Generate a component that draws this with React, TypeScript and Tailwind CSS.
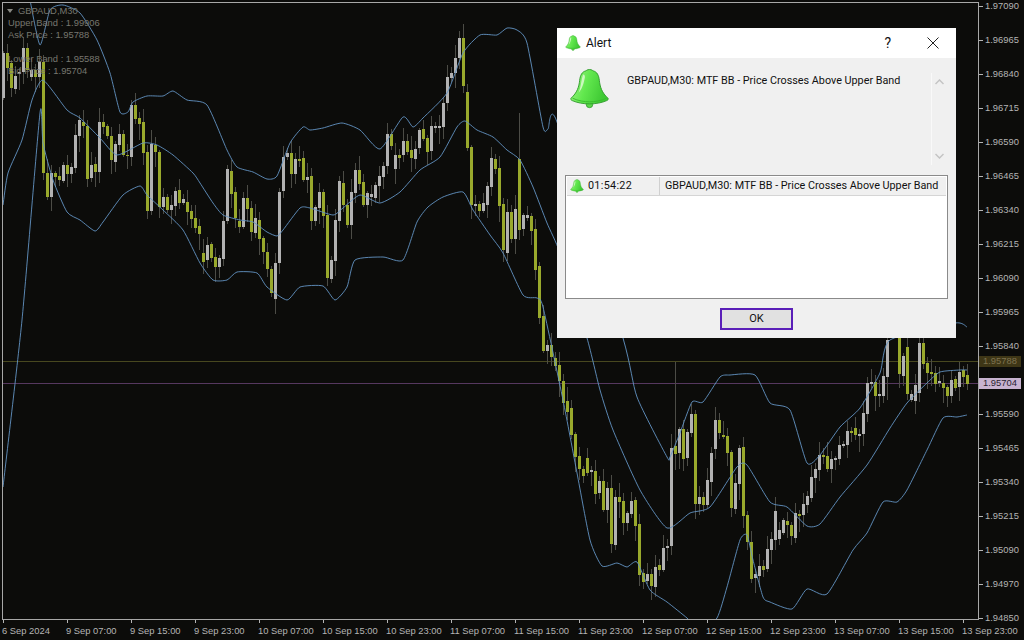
import { useId } from "react";

// ── Chart data, in page pixels ────────────────────────────────────────────────

type Candle = [x: number, top: number, bottom: number, olive: 0 | 1];

const CANDLES: Candle[] = [
  [3,53,98,0],[7,53,68,1],[11,63,88,1],[15,76,89,0],[19,72,74,0],[23,48,72,0],[27,48,70,1],[31,70,77,0],[35,70,77,1],[39,62,77,0],
  [43,62,173,1],[47,173,197,1],[51,173,197,0],[55,173,177,1],[59,176,180,1],[63,165,181,0],[67,165,174,1],[71,167,174,0],[75,135,168,0],[79,120,136,0],
  [83,122,126,1],[87,126,179,1],[91,165,178,0],[95,164,172,1],[99,122,172,0],[103,122,127,1],[107,126,136,1],[111,136,160,1],[115,144,162,0],[119,134,145,0],
  [123,134,155,1],[127,155,156,1],[131,105,157,0],[135,105,119,1],[139,118,124,1],[143,122,153,1],[147,152,211,1],[151,144,211,0],[155,145,152,1],[159,152,207,1],
  [163,197,207,0],[167,197,210,1],[171,205,210,0],[175,191,206,0],[179,190,203,1],[183,199,203,0],[187,202,212,1],[191,211,219,1],[195,218,228,1],[199,226,234,1],
  [203,253,262,1],[207,245,260,0],[211,244,258,1],[215,257,267,1],[219,258,267,0],[223,221,259,0],[227,169,221,0],[231,171,194,1],[235,192,218,1],[239,221,227,1],
  [243,198,227,0],[247,198,209,1],[251,208,232,1],[255,218,233,0],[259,220,239,1],[263,238,252,1],[267,252,269,1],[271,269,293,1],[275,263,299,0],[279,192,263,0],
  [283,157,191,0],[287,153,157,0],[291,153,174,1],[295,159,174,0],[299,159,161,1],[303,158,180,1],[307,177,180,0],[311,176,221,1],[315,207,221,0],[319,192,208,0],
  [323,192,216,1],[327,215,278,1],[331,260,279,0],[335,220,261,0],[339,181,221,0],[343,183,205,1],[347,205,225,1],[351,192,225,0],[355,170,193,0],[359,170,184,1],
  [363,182,205,1],[367,193,205,0],[371,194,197,0],[375,185,198,0],[379,176,186,0],[383,166,177,0],[387,134,166,0],[391,134,146,1],[395,155,169,0],[399,155,158,1],
  [403,141,155,0],[407,141,152,1],[411,150,158,1],[415,149,159,0],[419,130,148,0],[423,129,139,1],[427,138,152,1],[431,126,151,0],[435,126,128,0],[439,126,128,0],
  [443,103,127,0],[447,77,103,0],[451,73,78,0],[455,58,73,0],[459,38,58,0],[463,38,86,1],[467,92,148,1],[471,147,205,1],[475,204,206,0],[479,204,211,1],
  [483,203,211,0],[487,186,205,0],[491,158,187,0],[495,159,169,1],[499,168,206,1],[503,204,250,1],[507,212,253,0],[511,212,239,1],[515,209,239,0],[519,159,230,1],
  [523,215,229,0],[527,215,218,0],[531,216,231,1],[535,229,270,1],[539,266,318,1],[543,316,351,1],[547,345,351,0],[551,345,357,1],[555,358,366,1],[559,365,381,1],
  [563,381,403,1],[567,401,412,1],[571,408,435,1],[575,434,457,1],[579,456,469,1],[583,469,476,1],[587,458,473,1],[591,470,472,0],[595,471,494,1],[599,481,493,0],
  [603,481,510,1],[607,488,510,0],[611,488,544,1],[615,497,545,0],[619,497,502,1],[623,501,523,1],[627,513,523,0],[631,501,514,0],[635,500,526,1],[639,524,575,1],
  [643,573,582,1],[647,574,581,0],[651,574,586,1],[655,567,587,0],[659,565,570,1],[663,548,570,0],[667,546,548,0],[671,448,546,0],[675,446,454,1],[679,429,453,0],
  [683,429,459,1],[687,432,458,0],[691,414,433,0],[695,414,504,1],[699,497,504,0],[703,497,505,1],[707,480,505,0],[711,453,482,0],[715,420,449,0],[719,420,433,1],
  [723,435,437,1],[727,436,453,1],[731,452,508,1],[735,483,509,0],[739,448,484,0],[743,447,516,1],[747,515,542,1],[751,542,579,1],[755,574,578,0],[759,566,576,0],
  [763,566,570,1],[767,549,569,0],[771,539,550,0],[775,511,540,0],[779,530,539,0],[783,520,533,0],[787,521,525,1],[791,525,536,1],[795,513,538,0],[799,514,516,1],
  [803,504,515,0],[807,496,505,0],[811,477,498,0],[815,469,478,0],[819,455,470,0],[823,455,457,1],[827,456,469,1],[831,459,469,0],[835,458,460,0],[839,445,459,0],
  [843,444,446,0],[847,431,445,0],[851,431,433,1],[855,428,435,1],[859,434,436,0],[863,413,434,0],[867,383,414,0],[871,382,384,0],[875,382,396,1],[879,394,396,0],
  [883,376,396,0],[887,340,377,0],[899,338,374,1],[903,356,376,0],[907,347,394,1],[911,394,400,0],[915,385,401,0],[919,343,393,0],[923,343,364,1],[927,363,373,1],
  [931,372,374,1],[935,373,384,1],[939,381,383,0],[943,383,388,1],[947,387,396,1],[951,380,396,0],[955,379,388,1],[959,372,387,0],[963,370,377,1],[967,375,384,1],
];

const WICK_OVERRIDE: Record<number, [number, number]> = {
  675: [362, 470],
  519: [113, 240],
  887: [338, 400],
};

const UPPER = "30,0 40,45 50,10 63,5 80,13 97,40 110,73 120,112 128,112 133,102 147,96 163,96 173,91 187,100 207,105 227,150 237,167 253,172 267,179 277,176 290,143 303,127 310,130 323,128 342,123 360,130 380,149 403,117 413,127 423,118 447,93 463,53 480,35 497,35 507,28 517,30 527,43 543,127 548,129 557,122 623,338 637,397 667,457 670,457 680,433 692,402 703,402 720,377 730,375 755,375 770,403 790,410 807,463 820,455 840,427 860,408 880,373 890,340 955,323 967,327";
const MIDDLE = "3,205 8,173 22,140 32,100 43,80 67,110 80,118 100,138 117,155 143,143 157,145 173,155 193,173 200,183 213,203 223,215 240,220 253,222 267,232 277,236 283,230 300,208 310,208 333,215 343,208 360,195 380,203 400,192 420,170 440,157 457,127 465,121 477,130 493,137 507,150 520,160 533,187 547,223 560,253 587,338 600,390 613,430 640,490 667,528 690,513 710,507 737,467 747,465 770,502 787,507 807,526 820,524 840,497 867,465 890,428 907,403 927,383 940,372 960,370 967,370";
const LOWER = "3,487 22,320 40,113 43,143 53,180 67,212 80,220 95,231 103,222 123,195 140,186 147,195 163,210 183,230 200,263 213,280 227,280 237,272 257,273 267,287 287,300 300,287 323,286 335,300 347,287 355,260 383,257 403,260 417,222 428,207 443,197 463,192 473,210 490,235 503,253 523,295 537,298 543,307 563,400 577,473 590,540 602,566 617,563 627,567 637,562 650,590 667,602 687,618 700,630 717,618 727,587 740,540 747,535 753,560 763,597 770,602 792,609 807,589 827,594 853,550 867,533 883,502 897,502 907,490 927,450 943,418 957,417 967,415";

const PRICES = [
  "1.97090","1.96965","1.96840","1.96715","1.96590","1.96465","1.96340","1.96215","1.96090","1.95965",
  "1.95840","","1.95590","1.95465","1.95340","1.95215","1.95090","1.94970","1.94850",
];

const DATES = [
  "6 Sep 2024","9 Sep 07:00","9 Sep 15:00","9 Sep 23:00","10 Sep 07:00","10 Sep 15:00","10 Sep 23:00","11 Sep 07:00",
  "11 Sep 15:00","11 Sep 23:00","12 Sep 07:00","12 Sep 15:00","12 Sep 23:00","13 Sep 07:00","13 Sep 15:00","13 Sep 23:00",
];

const MESSAGE = "GBPAUD,M30: MTF BB - Price Crosses Above Upper Band";

// Catmull-Rom through the read-off points, the bands are curves not polygons
function smooth(points: string) {
  const p = points.split(" ").map((s) => s.split(",").map(Number));
  let d = `M${p[0][0]} ${p[0][1]}`;
  for (let i = 0; i < p.length - 1; i++) {
    const a = p[Math.max(i - 1, 0)];
    const b = p[i];
    const c = p[i + 1];
    const e = p[Math.min(i + 2, p.length - 1)];
    const c1 = [b[0] + (c[0] - a[0]) / 10, b[1] + (c[1] - a[1]) / 10];
    const c2 = [c[0] - (e[0] - b[0]) / 10, c[1] - (e[1] - b[1]) / 10];
    d += `C${c1[0]} ${c1[1]} ${c2[0]} ${c2[1]} ${c[0]} ${c[1]}`;
  }
  return d;
}

// ── Chart ─────────────────────────────────────────────────────────────────────

function Chart() {
  return (
    <svg className="block" width={975} height={616} viewBox="3 3 975 616">
      <rect x={3} y={361} width={975} height={1} fill="#48481f" />
      <rect x={3} y={383} width={975} height={1} fill="#56385f" />
      {CANDLES.map(([x, top, bottom], i) => {
        const over = WICK_OVERRIDE[x];
        const hi = over ? over[0] : top - ((i * 7) % 13) - 2;
        const lo = over ? over[1] : bottom + ((i * 11) % 15) + 2;
        return <rect key={x} x={x} y={hi} width={1} height={lo - hi} fill="#4c4c46" />;
      })}
      {CANDLES.map(([x, top, bottom, olive]) => (
        <rect
          key={x}
          x={x - 1}
          y={top}
          width={3}
          height={bottom - top}
          fill={olive ? "#99a92c" : "#b2b2b2"}
        />
      ))}
      {[UPPER, MIDDLE, LOWER].map((pts) => (
        <path key={pts.length} d={smooth(pts)} fill="none" stroke="#6394c4" strokeWidth={0.9} />
      ))}
    </svg>
  );
}

function PriceAxis() {
  return (
    <div className="relative flex flex-col -mt-[13px] text-[9.4px] text-[#b4b4b4]">
      {PRICES.map((p, i) => (
        <div key={i} className="flex h-[34px] shrink-0 items-center">
          <span className="h-px w-[4px] bg-[#b4b4b4]" />
          <span className="ml-[2px]">{p}</span>
        </div>
      ))}
    </div>
  );
}

function DateAxis() {
  return (
    <div className="flex text-[9.4px] text-[#b4b4b4]">
      {DATES.map((d) => (
        <div key={d} className="flex w-[64px] shrink-0 flex-col">
          <span className="ml-[1px] h-[3px] w-px bg-[#b4b4b4]" />
          <span className="mt-[1px] whitespace-nowrap">{d}</span>
        </div>
      ))}
    </div>
  );
}

function Legend() {
  return (
    <div className="absolute left-[8px] top-[4px] flex flex-col text-[9.4px] leading-[12px] text-[#77776f]">
      <div className="flex h-[13px] items-center">
        <span className="-ml-[1px] h-0 w-0 border-x-[3px] border-t-[4px] border-x-transparent border-t-[#8a8a84]" />
        <span className="ml-[5px]">GBPAUD,M30</span>
      </div>
      <span>Upper Band : 1.99906</span>
      <span>Ask Price : 1.95788</span>
      <span className="h-[12px]" />
      <span>Lower Band : 1.95588</span>
      <span>Bid Price : 1.95704</span>
    </div>
  );
}

// ── Alert dialog ──────────────────────────────────────────────────────────────

function Bell({ size }: { size: number }) {
  const id = useId();
  return (
    <svg width={size} height={size} viewBox="0 0 40 40">
      <defs>
        <linearGradient id={id} x1="0" y1="0" x2="1" y2="0.3">
          <stop offset="0" stopColor="#a6f58c" />
          <stop offset="0.5" stopColor="#62e84e" />
          <stop offset="1" stopColor="#3fc934" />
        </linearGradient>
      </defs>
      <circle cx="20" cy="35.5" r="3.2" fill="#5bd94a" stroke="#2f9a2a" strokeWidth="0.8" />
      <path
        d="M20 1.500c-2.200 0-3 1-3.600 1.300C12.600 3.800 11 7 10.400 12c-.7 6.500-2.400 12-8.400 17.500-.8 1 .1 1.800 1.200 2.300C8 34 14 35 20 35s12-1 16.800-3.200c1.100-.5 2-1.300 1.200-2.300C32 24 30.300 18.500 29.600 12 29 7 27.400 3.800 23.600 2.800 23 2.500 22.200 1.500 20 1.500z"
        fill={`url(#${id})`}
        stroke="#2f9a2a"
        strokeWidth="0.9"
      />
      <path d="M3.500 29.500C9 32 15 33 20 33s11-1 16.500-3.500" fill="none" stroke="#39b82f" strokeWidth="0.9" />
      <path d="M13.500 7c-1.500 4-1.500 10-4 17 3-3 5-9 6-15 .2-2-1.300-3.500-2-2z" fill="#e4fbd8" opacity="0.8" />
    </svg>
  );
}

function AlertDialog() {
  return (
    <div
      className="absolute left-[557px] top-[28px] flex h-[310px] w-[399px] flex-col bg-[#f0f0f0] text-[10.8px] text-[#111]"
      style={{ fontFamily: "Roboto, Arial, sans-serif" }}
    >
      <div className="flex h-[30px] shrink-0 items-center bg-white pl-[8px]">
        <Bell size={16} />
        <span className="ml-[5px] text-[12px]">Alert</span>
        <span className="ml-auto mr-[36px] text-[14px] leading-none">?</span>
        <svg className="mr-[17px]" width={12} height={12} viewBox="0 0 12 12" stroke="#222" strokeWidth="1">
          <path d="M.5.5l11 11M11.500.5l-11 11" fill="none" />
        </svg>
      </div>

      <div className="flex h-[117px] shrink-0">
        <div className="ml-[12px] mt-[10px]">
          <Bell size={41} />
        </div>
        <p className="ml-[17px] mt-[15px] w-[304px] whitespace-nowrap leading-[16px]">{MESSAGE}</p>
        <div className="mt-[15px] flex h-[92px] w-[15px] flex-col items-center justify-between border-l border-[#f9f9f9] py-[6px] text-[#c4c4c4]">
          <svg width={9} height={6} viewBox="0 0 9 6" fill="none" stroke="currentColor" strokeWidth="1.500">
            <path d="M.5 5l4-4 4 4" />
          </svg>
          <svg width={9} height={6} viewBox="0 0 9 6" fill="none" stroke="currentColor" strokeWidth="1.500">
            <path d="M.5 1l4 4 4-4" />
          </svg>
        </div>
      </div>

      <div className="mx-[8px] flex h-[124px] shrink-0 flex-col border border-[#8a8a8a] bg-white px-px pt-px">
        <div className="flex h-[19px] items-center border-b border-[#d5d5d5] bg-[#f0f0f0]">
          <div className="flex h-full w-[93px] shrink-0 items-center border-r border-[#d0d0d0] pl-[3px]">
            <Bell size={14} />
            <span className="ml-[4px] tracking-[0.3px]">01:54:22</span>
          </div>
          <span className="ml-[5px] whitespace-nowrap">{MESSAGE}</span>
        </div>
      </div>

      <div className="flex flex-1 items-start justify-center pt-[9px]">
        <button className="flex h-[22px] w-[73px] items-center justify-center border-2 border-[#5a1fb8] bg-[#e1e1e1] text-[11px]">
          OK
        </button>
      </div>
    </div>
  );
}

export default function App() {
  return (
    <div
      className="relative h-[640px] w-[1024px] overflow-hidden bg-[#0c0c0a] pl-[2px] pt-[2px]"
      style={{ fontFamily: '"Liberation Sans", Arial, sans-serif' }}
    >
      <div className="flex h-[618px]">
        <div className="w-[977px] shrink-0 border border-[#a8a8a8]">
          <Chart />
        </div>
        <PriceAxis />
      </div>
      <DateAxis />

      <Legend />

      {/* Ask and bid tags on the price axis */}
      <div className="absolute left-[979px] top-[356px] flex h-[11px] w-[42px] items-center bg-[#3e3616] pl-[4px] text-[9.4px] text-[#7d7250]">
        1.95788
      </div>
      <div className="absolute left-[979px] top-[378px] flex h-[11px] w-[42px] items-center bg-[#c8b3d0] pl-[4px] text-[9.4px] text-[#2a2230]">
        1.95704
      </div>

      <AlertDialog />
    </div>
  );
}
